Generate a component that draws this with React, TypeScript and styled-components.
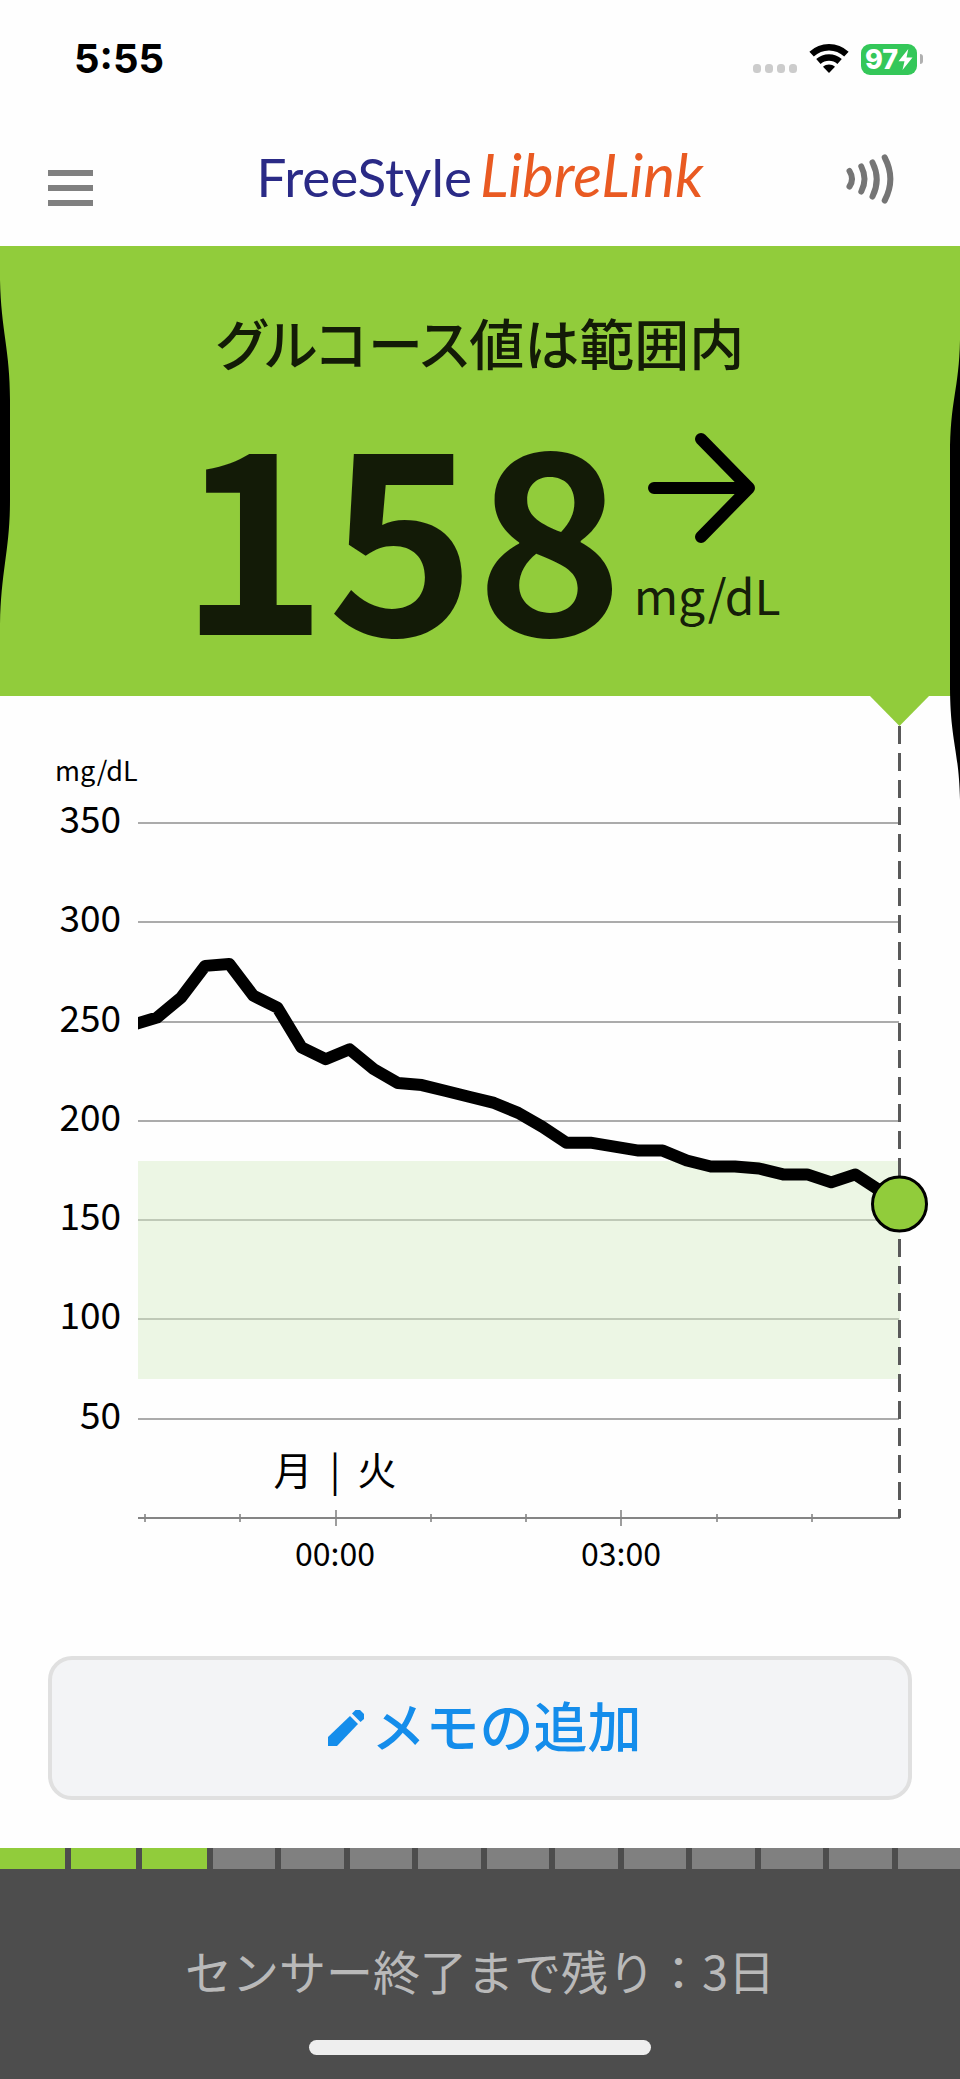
import React from "react";
import styled, { createGlobalStyle } from "styled-components";

const GREEN = "#91cc3b";

const GlobalStyle = createGlobalStyle`
  *, *::before, *::after { box-sizing: border-box; }
  html, body { margin: 0; padding: 0; background: #fefefe; }
  body { font-family: "Noto Sans CJK JP", "Noto Sans", sans-serif; }
  button { font: inherit; border: 0; padding: 0; background: none; cursor: pointer; }
  svg { display: block; }
`;

const Screen = styled.div`
  position: relative;
  display: flex;
  flex-direction: column;
  min-height: 100vh;
  overflow: hidden;
`;

const StatusBar = styled.div`
  display: flex;
  align-items: center;
  justify-content: space-between;
  height: 118px;
  padding: 0 37px 0 74px;
`;

const Clock = styled.time`
  font: 700 40px/48px Inter, sans-serif;
  color: #000;
`;

const StatusIcons = styled.div`
  display: flex;
  align-items: center;
  gap: 12px;
`;

const Header = styled.header`
  display: grid;
  grid-template-columns: 1fr auto 1fr;
  align-items: center;
  height: 128px;
  padding: 0 48px;
`;

const IconButton = styled.button<{ $end?: boolean }>`
  justify-self: ${(p) => (p.$end ? "end" : "start")};
`;

const Logo = styled.h1`
  display: flex;
  align-items: baseline;
  gap: 8px;
  margin: 0;
  padding-bottom: 14px;
  font-family: Lato, sans-serif;
  font-weight: 400;
  line-height: 72px;
`;

const LogoFree = styled.span`
  font-size: 53px;
  color: #2a2a86;
`;

const LogoLibre = styled.span`
  font-size: 60px;
  font-style: italic;
  color: #e95a22;
`;

const Banner = styled.section`
  display: flex;
  flex-direction: column;
  align-items: center;
  gap: 20px;
  padding: 55px 24px 45px;
  background: ${GREEN};
  color: rgba(0, 0, 0, 0.87);
`;

const BannerTitle = styled.h2`
  margin: 0;
  font-size: 55px;
  font-weight: 500;
  line-height: 80px;
  font-feature-settings: "palt";
`;

const Reading = styled.div`
  display: flex;
  align-items: flex-start;
  gap: 10px;
`;

const ReadingValue = styled.strong`
  font-size: 251px;
  font-weight: 700;
  line-height: 250px;
`;

const ReadingSide = styled.div`
  display: flex;
  flex-direction: column;
  gap: 18px;
  padding-top: 29px;
`;

const Unit = styled.span`
  font-size: 48px;
  line-height: 60px;
`;

const ChartSection = styled.section`
  svg {
    width: 100%;
    height: auto;
  }
`;

const Actions = styled.div`
  display: flex;
  padding: 60px 48px 48px;
`;

const NoteButton = styled.button`
  && {
    display: flex;
    flex: 1;
    align-items: center;
    justify-content: center;
    gap: 8px;
    height: 144px;
    border: 4px solid #e0e0e0;
    border-radius: 24px;
    background: #f3f4f6;
    color: #148deb;
    font-size: 54px;
    font-weight: 500;
    line-height: 80px;
  }
`;

const NoteLabel = styled.span`
  padding-bottom: 6px;
`;

const Footer = styled.footer`
  display: flex;
  flex: 1;
  flex-direction: column;
  background: #4d4d4d;
`;

const DayBar = styled.div`
  display: flex;
  gap: 6px;
  height: 21px;
`;

const Day = styled.span<{ $left: boolean }>`
  flex: ${(p) => (p.$left ? 26 : 25)};
  background: ${(p) => (p.$left ? GREEN : "#808080")};
`;

const SensorText = styled.p`
  margin: 0;
  padding-top: 66px;
  text-align: center;
  font-size: 47px;
  line-height: 70px;
  color: #b9b9b9;
`;

const HomeIndicator = styled.div`
  width: 342px;
  height: 15px;
  margin: auto auto 24px;
  border-radius: 8px;
  background: #eeeeee;
`;

const EdgeLeft = styled.svg`
  position: absolute;
  left: 0;
  top: 280px;
`;

const EdgeRight = styled.svg`
  position: absolute;
  right: 0;
  top: 340px;
`;

function SignalDots() {
  return (
    <svg width="44" height="32" viewBox="0 0 44 32" fill="#cccccc" aria-hidden="true">
      {[0, 12, 24, 36].map((x) => (
        <rect key={x} x={x} y="21" width="8" height="9" rx="3.5" />
      ))}
    </svg>
  );
}

function WifiIcon() {
  return (
    <svg width="40" height="32" viewBox="0 0 40 32" aria-hidden="true">
      <g fill="none" stroke="#000" strokeWidth="6.5">
        <path d="M2.600 11.200C12.500 2 27.500 2 37.400 11.200" />
        <path d="M9.400 18.500C15.400 13 24.600 13 30.600 18.500" />
      </g>
      <path d="M14 23.800C17.400 20.700 22.600 20.700 26 23.800L20 30Z" fill="#000" />
    </svg>
  );
}

const BatteryBox = styled.div`
  display: flex;
  align-items: center;
  gap: 3px;
`;

const BatteryBody = styled.div`
  display: flex;
  align-items: center;
  justify-content: center;
  width: 56px;
  height: 31px;
  border-radius: 9px;
  background: #34c759;
  color: #fff;
  font: 800 27px/31px Inter, sans-serif;
`;

const BatteryCap = styled.span`
  width: 3px;
  height: 10px;
  border-radius: 0 4px 4px 0;
  background: #b0b0b0;
`;

function Battery() {
  return (
    <BatteryBox>
      <BatteryBody>
        97
        <svg width="15" height="21" viewBox="0 0 14 21" fill="#fff" aria-hidden="true">
          <path d="M9.800 0L0 12.200H6L4 21L14 8.400H8Z" />
        </svg>
      </BatteryBody>
      <BatteryCap />
    </BatteryBox>
  );
}

const READINGS = [
  252, 262, 278, 279, 263, 257, 237, 231, 236, 226, 219, 218, 215, 212, 209, 204, 197, 189, 189,
  187, 185, 185, 180, 177, 177, 176, 173, 173, 169, 173, 165,
];
const LEVELS = [350, 300, 250, 200, 150, 100, 50];
const HOURS = [145, 240, 336, 431, 526, 621, 717, 812];
const LEFT = 138;
const RIGHT = 899;
const AXIS = 822;

const levelY = (v: number) => Math.round(AXIS - v * 1.986);

function GlucoseChart() {
  const points = [
    `${LEFT - 6},${levelY(250) + 3}`,
    ...READINGS.map((v, i) => `${157 + i * 24.08},${AXIS - v * 1.986}`),
    `${RIGHT},508`,
  ].join(" ");

  return (
    <svg viewBox="0 0 960 900" role="img" aria-label="グルコース値の推移">
      <clipPath id="plot">
        <rect x={LEFT} y="0" width="822" height={AXIS} />
      </clipPath>
      <g stroke="#8f8f8f" strokeWidth="1.6">
        {LEVELS.map((v) => (
          <line key={v} x1={LEFT} x2={RIGHT} y1={levelY(v)} y2={levelY(v)} />
        ))}
      </g>
      <rect
        x={LEFT}
        y={levelY(180)}
        width={762}
        height={levelY(70) - levelY(180)}
        fill="rgb(216,238,198)"
        fillOpacity="0.45"
      />
      <g stroke="#858585" strokeWidth="2">
        <line x1={LEFT} x2={RIGHT + 1} y1={AXIS} y2={AXIS} />
        {HOURS.map((x, i) => {
          const r = i === 2 || i === 5 ? 8 : 4;
          return <line key={x} x1={x} x2={x} y1={AXIS - r} y2={AXIS + r} strokeWidth="1.6" />;
        })}
      </g>
      <line x1="899.5" x2="899.5" y1="30" y2={AXIS} stroke="#595959" strokeWidth="3" strokeDasharray="18 9" />
      <path d="M869 -1H930L899.5 30Z" fill={GREEN} />
      <polyline
        points={points}
        fill="none"
        stroke="#000"
        strokeWidth="12"
        strokeLinejoin="round"
        clipPath="url(#plot)"
      />
      <circle cx="899.5" cy="508" r="27" fill={GREEN} stroke="#000" strokeWidth="3" />
      <text x="55" y="85" fontSize="27">mg/dL</text>
      <g fontSize="37" textAnchor="end">
        {LEVELS.map((v) => (
          <text key={v} x="121" y={levelY(v) + 10}>{v}</text>
        ))}
      </g>
      <g fontSize="39" textAnchor="middle">
        <text x="293" y="789">月</text>
        <text x="335" y="789">|</text>
        <text x="377" y="789">火</text>
      </g>
      <g fontSize="32" textAnchor="middle">
        <text x="335" y="870">00:00</text>
        <text x="621" y="870">03:00</text>
      </g>
    </svg>
  );
}

export default function App() {
  return (
    <Screen>
      <GlobalStyle />
      <StatusBar>
        <Clock>5:55</Clock>
        <StatusIcons>
          <SignalDots />
          <WifiIcon />
          <Battery />
        </StatusIcons>
      </StatusBar>

      <Header>
        <IconButton type="button" aria-label="メニュー">
          <svg width="45" height="64" viewBox="0 0 45 64" fill="#808080">
            <rect y="20" width="45" height="6" />
            <rect y="35" width="45" height="6" />
            <rect y="50" width="45" height="6" />
          </svg>
        </IconButton>
        <Logo>
          <LogoFree>FreeStyle</LogoFree>
          <LogoLibre>LibreLink</LogoLibre>
        </Logo>
        <IconButton type="button" $end aria-label="スキャン">
          <svg
            width="66"
            height="64"
            viewBox="0 0 66 64"
            fill="none"
            stroke="#757575"
            strokeWidth="6"
            strokeLinecap="round"
          >
            <path d="M3.500 21Q8.500 29 3.500 36.500" />
            <path d="M15.300 16.500Q21.700 29 15.300 41.500" />
            <path d="M26.500 12.500Q35 29.500 26.500 46.500" />
            <path d="M38.700 7.500Q50 29 38.700 50.500" />
          </svg>
        </IconButton>
      </Header>

      <Banner>
        <BannerTitle>グルコース値は範囲内</BannerTitle>
        <Reading>
          <ReadingValue>158</ReadingValue>
          <ReadingSide>
            <svg
              width="124"
              height="116"
              viewBox="0 0 124 116"
              fill="none"
              stroke="#000"
              strokeWidth="12"
              strokeLinecap="round"
              strokeLinejoin="round"
              role="img"
              aria-label="横ばい"
            >
              <path d="M20 58H115M67 9L115 58L67 107" />
            </svg>
            <Unit>mg/dL</Unit>
          </ReadingSide>
        </Reading>
      </Banner>

      <ChartSection>
        <GlucoseChart />
      </ChartSection>

      <Actions>
        <NoteButton type="button">
          <svg width="45" height="36" viewBox="-9 0 45 36" fill="#148deb" aria-hidden="true">
            <path d="M0 27L22 6L30 14L9 36H0Z" />
            <path d="M24 3.500L27.500 0H32L36 4V9L32.500 12Z" />
          </svg>
          <NoteLabel>メモの追加</NoteLabel>
        </NoteButton>
      </Actions>

      <Footer>
        <DayBar>
          {Array.from({ length: 14 }, (_, i) => (
            <Day key={i} $left={i < 3} />
          ))}
        </DayBar>
        <SensorText>センサー終了まで残り：3日</SensorText>
        <HomeIndicator />
      </Footer>

      <EdgeLeft width="10" height="344" viewBox="0 0 10 344" aria-hidden="true">
        <path d="M0 0C1 50 10 70 10 120V220C10 270 1 290 0 344Z" />
      </EdgeLeft>
      <EdgeRight width="10" height="460" viewBox="0 0 10 460" aria-hidden="true">
        <path d="M10 0C9 50 0 60 0 116V346C0 400 9 410 10 460Z" />
      </EdgeRight>
    </Screen>
  );
}
